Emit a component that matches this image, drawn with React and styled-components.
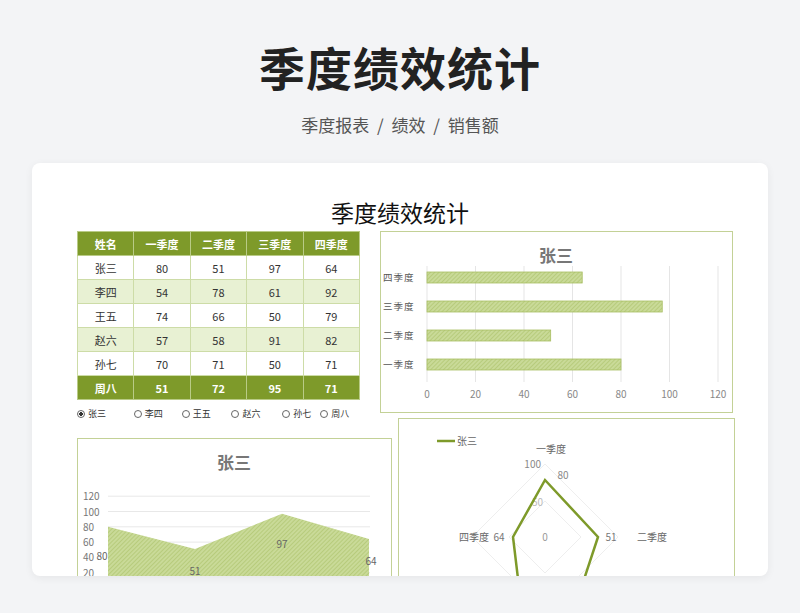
import React from "react";
import styled, { createGlobalStyle } from "styled-components";

const G = createGlobalStyle`
  html,body{margin:0;padding:0;background:#f3f4f6;font-family:"Noto Sans CJK SC","Noto Sans",sans-serif;}
  #root{height:613px;overflow:hidden;}
`;
const Page = styled.div`display:flex;flex-direction:column;align-items:center;`;
const H1 = styled.h1`margin:34px 0 0;font-size:46px;line-height:64px;font-weight:700;color:#222;letter-spacing:1px;`;
const Sub = styled.div`margin-top:14px;font-size:17px;color:#555;word-spacing:4px;`;
const Card = styled.div`
  margin-top:26px;width:736px;height:413px;background:#fff;border-radius:8px;
  box-shadow:0 2px 8px rgba(0,0,0,.06);overflow:hidden;position:relative;
`;
const SheetTitle = styled.div`text-align:center;font-size:23px;color:#111;margin-top:34px;line-height:30px;`;
const Grid = styled.div`display:grid;grid-template-columns:${p => p.$cols};column-gap:${p => p.$gap}px;padding:0 0 0 45px;margin-top:${p => p.$mt}px;`;
const Table = styled.table`border-collapse:collapse;width:283px;table-layout:fixed;font-size:11px;text-align:center;border:1px solid #a3b86c;`;
const Th = styled.td`
  background:#7e9a2a;color:#fff;font-weight:700;height:23px;border:1px solid #b9cb86;padding:0;
`;
const Td = styled.td`
  background:${p => p.$alt ? "#e8f1d3" : "#fff"};color:#333;height:23px;border:1px solid #cddca7;padding:0;
`;
const Radios = styled.div`display:flex;font-size:9px;color:#333;margin-top:7px;`;
const Radio = styled.span`
  width:${p => p.$w}px;display:flex;align-items:center;gap:3px;
  &::before{content:"";width:6px;height:6px;border:1px solid #666;border-radius:50%;
    background:${p => p.$on ? "radial-gradient(#333 45%,#fff 50%)" : "#fff"};}
`;
const Box = styled.div`border:1px solid #c3d196;background:#fff;width:${p => p.$w}px;height:${p => p.$h}px;margin-top:${p => p.$mt || 0}px;`;
const Left = styled.div`display:flex;flex-direction:column;`;

const data = [
  ["张三", 80, 51, 97, 64], ["李四", 54, 78, 61, 92], ["王五", 74, 66, 50, 79],
  ["赵六", 57, 58, 91, 82], ["孙七", 70, 71, 50, 71],
];
const Hatch = () => (
  <pattern id="h" width="3" height="3" patternUnits="userSpaceOnUse" patternTransform="rotate(45)">
    <rect width="3" height="3" fill="#c9da98" /><line x1="0" y1="0" x2="0" y2="3" stroke="#a6bd60" strokeWidth="1" />
  </pattern>
);

const BarChart = () => {
  const x0 = 46, s = 291 / 120;
  const bars = [["四季度", 64, 40], ["三季度", 97, 69], ["二季度", 51, 98], ["一季度", 80, 127]];
  return (
    <svg width="351" height="180" style={{ display: "block" }}>
      <defs><Hatch /></defs>
      <text x="175" y="30" textAnchor="middle" fontSize="17" fontWeight="700" fill="#777">张三</text>
      {[0, 20, 40, 60, 80, 100, 120].map(v => (
        <g key={v}>
          <line x1={x0 + v * s} x2={x0 + v * s} y1="34" y2="150" stroke="#e5e5e5" />
          <text x={x0 + v * s} y="166" textAnchor="middle" fontSize="10" fill="#888">{v}</text>
        </g>
      ))}
      {bars.map(([l, v, y]) => (
        <g key={l}>
          <text x="2" y={y + 9} fontSize="9.5" fill="#555" letterSpacing="1">{l}</text>
          <rect x={x0} y={y} width={v * s} height="11" fill="url(#h)" stroke="#a8be62" strokeWidth=".8" />
        </g>
      ))}
    </svg>
  );
};

const AreaChart = () => {
  const y = v => 149 - v * 0.765;
  const xs = [30, 117, 204, 291], vs = [80, 51, 97, 64];
  const pts = xs.map((x, i) => `${x},${y(vs[i])}`).join(" ");
  return (
    <svg width="313" height="160" style={{ display: "block" }}>
      <defs><Hatch /></defs>
      <text x="156" y="30" textAnchor="middle" fontSize="17" fontWeight="700" fill="#777">张三</text>
      {[120, 100, 80, 60, 40, 20].map(v => (
        <g key={v}>
          <line x1="30" x2="292" y1={y(v)} y2={y(v)} stroke="#e8e8e8" />
          <text x="5" y={y(v) + 4} fontSize="10" fill="#777">{v}</text>
        </g>
      ))}
      <polygon points={`30,160 ${pts} 291,160`} fill="url(#h)" />
      {xs.map((x, i) => <text key={i} x={x - (i === 0 ? 6 : i === 3 ? -2 : 0)} y={y(vs[i]) + (i === 2 ? 34 : i === 0 ? 33 : 26)} textAnchor="middle" fontSize="10" fill="#666">{vs[i]}</text>)}
    </svg>
  );
};

const Radar = () => {
  const cx = 146, cy = 118;
  const d = r => `${cx},${cy - r} ${cx + r},${cy} ${cx},${cy + r} ${cx - r},${cy}`;
  return (
    <svg width="335" height="170" style={{ display: "block" }}>
      <line x1="38" x2="56" y1="22" y2="22" stroke="#7e9a2a" strokeWidth="2.5" />
      <text x="58" y="26" fontSize="10" fill="#666">张三</text>
      <polygon points={d(73)} fill="none" stroke="#eee" />
      <polygon points={d(36)} fill="none" stroke="#eee" />
      <text x={cx + 6} y="34" textAnchor="middle" fontSize="10" fill="#666">一季度</text>
      <text x={cx - 4} y="49" textAnchor="end" fontSize="10" fill="#888">100</text>
      <text x={cx + 18} y="60" textAnchor="middle" fontSize="10" fill="#888">80</text>
      <text x={cx - 2} y="87" textAnchor="end" fontSize="10" fill="#bbb">50</text>
      <text x={cx} y={cy + 4} textAnchor="middle" fontSize="10" fill="#999">0</text>
      <text x={cx + 66} y={cy + 4} textAnchor="middle" fontSize="10" fill="#777">51</text>
      <text x={cx - 46} y={cy + 4} textAnchor="middle" fontSize="10" fill="#777">64</text>
      <text x={cx + 92} y={cy + 4} textAnchor="start" fontSize="10" fill="#666">二季度</text>
      <text x={cx - 56} y={cy + 4} textAnchor="end" fontSize="10" fill="#666">四季度</text>
      <polygon points={`${cx},${cy - 57} ${cx + 53},${cy} ${cx + 20},${cy + 100} ${cx - 20},${cy + 100} ${cx - 32},${cy}`} fill="none" stroke="#7e9a2a" strokeWidth="2.5" />
    </svg>
  );
};

export default function App() {
  return (
    <Page>
      <G />
      <H1>季度绩效统计</H1>
      <Sub>季度报表 / 绩效 / 销售额</Sub>
      <Card>
        <SheetTitle>季度绩效统计</SheetTitle>
        <Grid $cols="283px 1fr" $gap={20} $mt={4}>
          <Left>
            <Table>
              <tbody>
                <tr>{["姓名", "一季度", "二季度", "三季度", "四季度"].map(h => <Th key={h}>{h}</Th>)}</tr>
                {data.map((r, i) => <tr key={r[0]}>{r.map((c, j) => <Td key={j} $alt={i % 2 === 1}>{c}</Td>)}</tr>)}
                <tr>{["周八", 51, 72, 95, 71].map((c, j) => <Th key={j}>{c}</Th>)}</tr>
              </tbody>
            </Table>
            <Radios>
              {[["张三", 57, 1], ["李四", 48], ["王五", 50], ["赵六", 51], ["孙七", 38], ["周八", 40]].map(([n, w, on]) =>
                <Radio key={n} $w={w} $on={on}>{n}</Radio>)}
            </Radios>
          </Left>
          <Box $w={351} $h={180}><BarChart /></Box>
        </Grid>
        <Grid $cols="313px 1fr" $gap={8} $mt={-2}>
          <Box $w={313} $h={170} $mt={20}><AreaChart /></Box>
          <Box $w={335} $h={170}><Radar /></Box>
        </Grid>
      </Card>
    </Page>
  );
}
